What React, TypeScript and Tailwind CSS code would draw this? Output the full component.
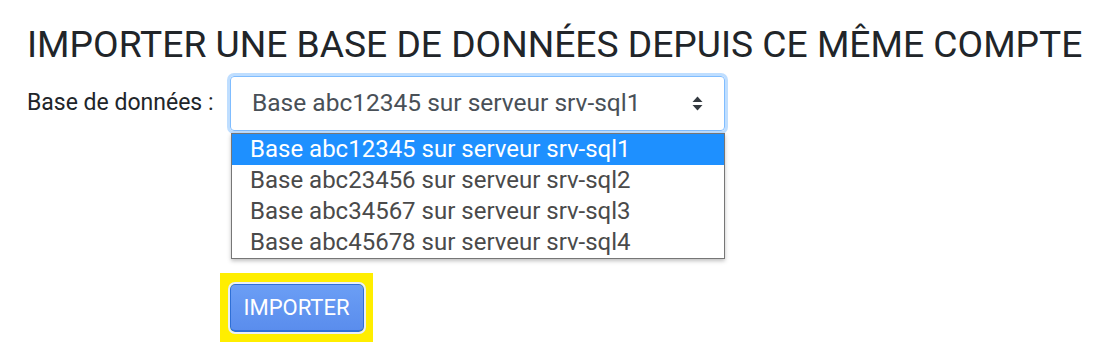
import React from "react";

const bases = [
  "Base abc12345 sur serveur srv-sql1",
  "Base abc23456 sur serveur srv-sql2",
  "Base abc34567 sur serveur srv-sql3",
  "Base abc45678 sur serveur srv-sql4",
];

export default function App() {
  return (
    <div className="w-[1113px] h-[363px] bg-white overflow-hidden pl-[27px] pt-[21px] font-['Roboto',sans-serif]">
      <h1 className="text-[37.2px] leading-[46px] text-[#212529] whitespace-nowrap">
        IMPORTER UNE BASE DE DONNÉES DEPUIS CE MÊME COMPTE
      </h1>

      <div className="flex items-center mt-[9px]">
        <label className="text-[23px] text-[#212529] w-[203px] shrink-0">Base de données :</label>
        <div className="relative">
          {/* select, opened */}
          <div className="w-[495px] h-[55px] flex items-center justify-between pl-[21px] pr-[21px] border border-[#80bdff] rounded-[4px] shadow-[0_0_0_3px_rgba(0,123,255,0.25)] text-[24.5px] text-[#495057]">
            <span className="whitespace-nowrap">{bases[0]}</span>
            <svg width="11" height="15" viewBox="0 0 11 15" className="shrink-0 text-[#343a40]">
              <path d="M5.5 0.5 L10.5 6 L0.5 6 Z" fill="currentColor" />
              <path d="M0.5 9 L10.5 9 L5.5 14.5 Z" fill="currentColor" />
            </svg>
          </div>

          {/* native options list */}
          <ul className="absolute left-[1px] top-[57px] w-[494px] bg-white border border-[#767676] shadow-[0_2px_4px_rgba(0,0,0,0.25)] text-[24px] text-[#4a4a4a]">
            {bases.map((b, i) => (
              <li
                key={b}
                className={`h-[31px] leading-[31px] pl-[18px] whitespace-nowrap ${
                  i === 0 ? "bg-[#1e90ff] text-white" : ""
                }`}
              >
                {b}
              </li>
            ))}
          </ul>
        </div>
      </div>

      <div className="mt-[142px] ml-[193px] w-[153px] h-[69px] bg-[#ffee00] flex items-center justify-center">
        <button className="w-[134px] h-[48px] rounded-[5px] bg-gradient-to-b from-[#6b9ef5] to-[#5a8ded] border border-[#2f6fd6] border-b-2 outline outline-2 outline-[#e8eef8] text-white text-[22px]">
          IMPORTER
        </button>
      </div>
    </div>
  );
}
